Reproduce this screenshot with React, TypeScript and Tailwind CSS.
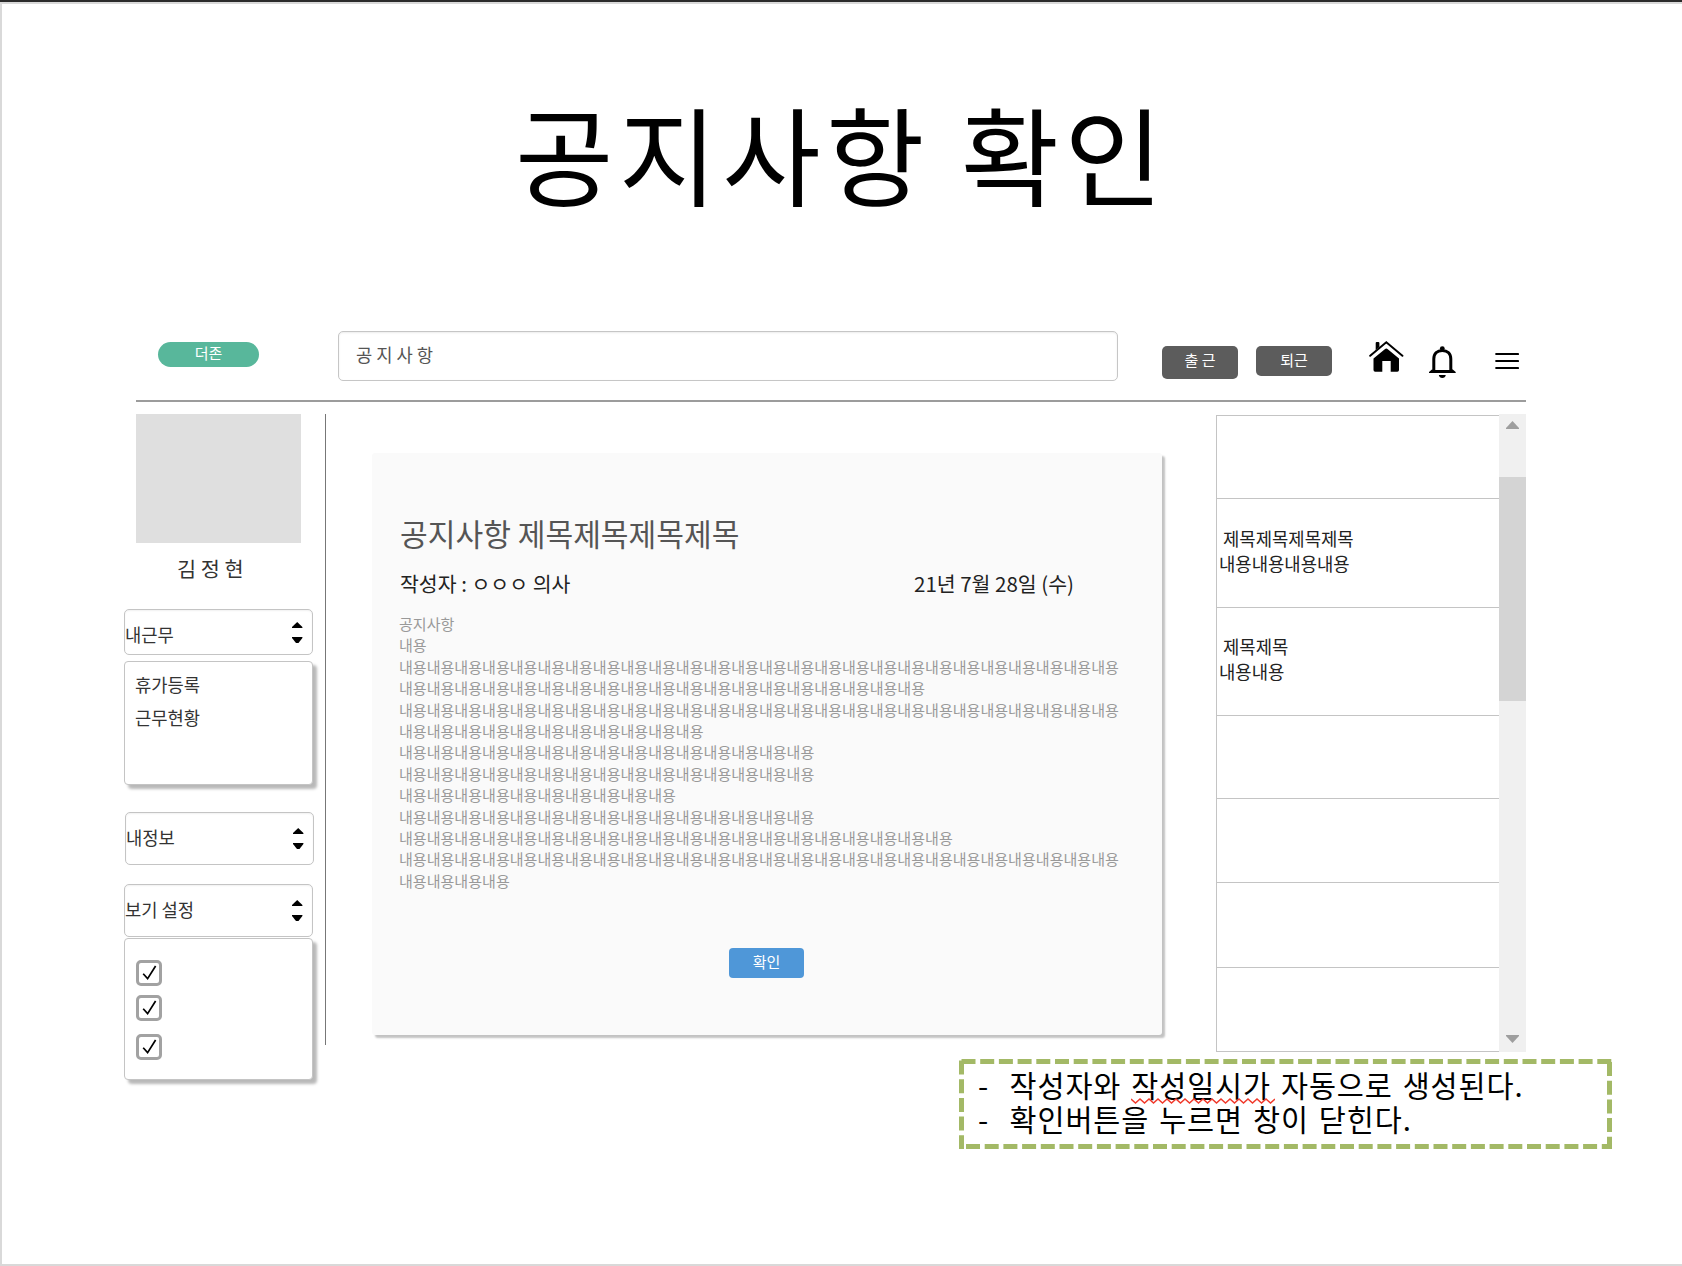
import React from "react";

const bodyCounts = [26, 19, 26, 11, 15, 15, 10, 15, 20, 26, 4];

function Stepper() {
  return (
    <svg width="11" height="22" viewBox="0 0 11 22" className="mt-px shrink-0">
      <path d="M5.2 0 L10.4 5 V6 H0 V5 Z" fill="#000" />
      <path d="M0 15 H10.4 V16 L6.5 21 H4 L0 16 Z" fill="#000" />
    </svg>
  );
}

function Select({ label, className, labelClass }: { label: string; className: string; labelClass: string }) {
  return (
    <div
      className={`flex shrink-0 items-center justify-between rounded-[5px] border border-[#c4c4c4] bg-white pr-[9px] text-[17.7px] text-[#333] shadow-[inset_0_1px_2px_rgba(0,0,0,0.06)] ${className}`}
    >
      <span className={`leading-[24px] ${labelClass}`}>{label}</span>
      <Stepper />
    </div>
  );
}

function Check({ className }: { className: string }) {
  return (
    <div
      className={`flex h-[26px] w-[26px] shrink-0 items-center justify-center rounded-[5px] border-[3px] border-[#a2a2a2] bg-white ${className}`}
    >
      <svg width="20" height="20" viewBox="1 1 20 20" fill="none" className="shrink-0">
        <path d="M5.2 11.8 L9.6 16.6 L17.6 4" stroke="#000" strokeWidth="1.7" />
      </svg>
    </div>
  );
}

function HomeIcon() {
  return (
    <svg width="35" height="32" viewBox="0 0 35 32" className="shrink-0">
      <path d="M6.7 9 V2 Q6.7 1 7.7 1 H9.4 Q10.4 1 10.4 2 V6 Z" fill="#000" />
      <path d="M1.2 14.8 L17.3 1.3 L33.4 14.8" fill="none" stroke="#000" strokeWidth="2" strokeLinecap="round" />
      <path
        d="M17.3 7.6 Q18 7.6 18.8 8.3 L30 17.6 V29 Q30 30.7 28.3 30.7 H21.7 V20 H13.3 V30.7 H6.2 Q4.5 30.7 4.5 29 V17.6 L15.8 8.3 Q16.6 7.6 17.3 7.6 Z"
        fill="#000"
      />
    </svg>
  );
}

function BellIcon() {
  return (
    <svg width="28" height="33" viewBox="0 0 28 33" className="shrink-0">
      <circle cx="13.3" cy="2.6" r="2.4" fill="#000" />
      <path
        d="M4.8 25 V13 C4.8 7.5 8.4 4.5 13.3 4.5 S21.8 7.5 21.8 13 V25"
        fill="none"
        stroke="#000"
        strokeWidth="3"
      />
      <path d="M0 27 V26 L3.5 23 V24 H23.2 V23 L26.7 26 V27 Z" fill="#000" />
      <path d="M9.8 29 H16.8 C16.4 31 15.2 32 13.3 32 S10.2 31 9.8 29 Z" fill="#000" />
    </svg>
  );
}

function MenuIcon() {
  return (
    <svg width="24" height="18" viewBox="0 0 24 18" className="shrink-0">
      <path d="M1.2 2 H23 M1.2 9 H23 M1.2 16 H23" stroke="#000" strokeWidth="2.2" strokeLinecap="round" />
    </svg>
  );
}

function Header() {
  return (
    <header className="ml-[12px] flex h-[72px] w-[1390px] shrink-0 items-start border-b-2 border-[#9c9c9c]">
      <div className="ml-[22px] mt-[12px] flex h-[25px] w-[101px] items-center justify-center rounded-full bg-[#58b79b] text-[15px] leading-[20px] text-white">
        <span className="-mt-[3px]">더존</span>
      </div>
      <div className="ml-[79px] mt-px flex h-[50px] w-[780px] items-center rounded-[5px] border border-[#c6c6c6] pl-[17px] text-[17.7px] text-[#555] shadow-[inset_0_1px_2px_rgba(0,0,0,0.08)]">
        <span className="-mt-[3px]">공 지 사 항</span>
      </div>
      <div className="ml-[44px] mt-[16px] flex h-[33px] w-[76px] items-center justify-center rounded-[5px] bg-[#5c5c5c] text-[15px] text-white">
        <span className="-mt-[5px]">출 근</span>
      </div>
      <div className="ml-[18px] mt-[16px] flex h-[30px] w-[76px] items-center justify-center rounded-[5px] bg-[#5c5c5c] text-[15px] text-white">
        <span className="-mt-[2px]">퇴근</span>
      </div>
      <div className="ml-[37px] mt-[11px]">
        <HomeIcon />
      </div>
      <div className="ml-[25px] mt-[16px]">
        <BellIcon />
      </div>
      <div className="ml-[38px] mt-[22px]">
        <MenuIcon />
      </div>
    </header>
  );
}

function Sidebar() {
  return (
    <aside className="flex w-[190px] shrink-0 flex-col">
      <div className="ml-[12px] h-[129px] w-[165px] shrink-0 bg-[#dfdfdf]" />
      <div className="ml-[53px] mt-[11px] h-[28px] shrink-0 whitespace-nowrap text-[20.8px] leading-[28px] text-[#333]">
        김 정 현
      </div>
      <Select label="내근무" labelClass="pt-[4px]" className="mt-[27px] h-[46px] w-[189px]" />
      <div className="mt-[6px] flex h-[124px] w-[189px] shrink-0 flex-col rounded-[4px] border border-[#c4c4c4] bg-white pl-[10px] pt-[6px] text-[17.7px] leading-[33px] text-[#333] shadow-[4px_4px_3px_rgba(0,0,0,0.28)]">
        <span>휴가등록</span>
        <span>근무현황</span>
      </div>
      <Select label="내정보" labelClass="pb-[4px]" className="ml-px mt-[27px] h-[53px] w-[189px]" />
      <Select label="보기 설정" labelClass="pb-[4px]" className="mt-[19px] h-[53px] w-[189px]" />
      <div className="mt-px flex h-[142px] w-[189px] shrink-0 flex-col rounded-[4px] border border-[#c4c4c4] bg-white pl-[11px] pt-[21px] shadow-[4px_4px_3px_rgba(0,0,0,0.28)]">
        <Check className="" />
        <Check className="mt-[9px]" />
        <Check className="mt-[13px]" />
      </div>
    </aside>
  );
}

function Notice() {
  return (
    <main className="ml-[46px] mt-[39px] flex h-[582px] w-[790px] shrink-0 flex-col rounded-[3px] bg-[#fafafa] pl-[27px] shadow-[3px_3px_2px_rgba(0,0,0,0.24)]">
      <h2 className="ml-px mt-[58px] h-[44px] text-[30.15px] leading-[44px] text-[#555]">공지사항 제목제목제목제목</h2>
      <div className="ml-px mt-[13px] flex h-[30px] w-[674px] items-center justify-between text-[20.5px] leading-[30px] text-[#222]">
        <span>작성자 : ㅇㅇㅇ 의사</span>
        <span>21년 7월 28일 (수)</span>
      </div>
      <div className="mt-[15px] whitespace-nowrap text-[15.05px] leading-[21.4px] text-[#999]">
        <p>공지사항</p>
        <p>내용</p>
        {bodyCounts.map((n, i) => (
          <p key={i}>{"내용".repeat(n)}</p>
        ))}
      </div>
      <button className="ml-[330px] mt-[57px] flex h-[30px] w-[75px] shrink-0 items-center justify-center rounded-[4px] bg-[#4f97d8] text-[15px] text-white">
        <span className="-mt-[3px]">확인</span>
      </button>
    </main>
  );
}

function Row({ title, text, className }: { title?: string; text?: string; className: string }) {
  return (
    <div className={`shrink-0 border-b border-[#c4c4c4] pl-[2px] text-[17.75px] leading-[25.4px] text-[#222] ${className}`}>
      {title && <p className="pl-[4px]">{title}</p>}
      {text && <p>{text}</p>}
    </div>
  );
}

function List() {
  return (
    <section className="ml-[54px] flex h-[638px] shrink-0">
      <div className="mt-px flex h-[637px] w-[283px] flex-col border-l border-t border-[#c4c4c4]">
        <Row className="h-[83px]" />
        <Row title="제목제목제목제목" text="내용내용내용내용" className="h-[109px] pt-[27px]" />
        <Row title="제목제목" text="내용내용" className="h-[108px] pt-[26px]" />
        <Row className="h-[83px]" />
        <Row className="h-[84px]" />
        <Row className="h-[85px]" />
        <Row className="h-[84px]" />
      </div>
      <div className="flex w-[27px] flex-col items-center bg-[#f0f0f0]">
        <svg width="13" height="8" viewBox="0 0 13 8" className="mt-[7px] shrink-0">
          <path d="M6.5 0 L13 7 V8 H0 V7 Z" fill="#9e9e9e" />
        </svg>
        <div className="mt-[48px] h-[224px] w-full bg-[#d4d4d4]" />
        <svg width="13" height="8" viewBox="0 0 13 8" className="mb-[9px] mt-auto shrink-0">
          <path d="M6.5 8 L13 1 V0 H0 V1 Z" fill="#9e9e9e" />
        </svg>
      </div>
    </section>
  );
}

function Annotation() {
  return (
    <div className="relative ml-[835px] h-[90px] w-[653px] shrink-0">
      <svg width="653" height="90" className="absolute inset-0" fill="none" stroke="#a3b966" strokeWidth="5">
        <path d="M2 2.5 H653" strokeDasharray="14 4.7" strokeDashoffset="-0.5" />
        <path d="M2.5 0 V90" strokeDasharray="14 4.7" strokeDashoffset="-1.5" />
        <path d="M650.5 0 V90" strokeDasharray="14 4.7" strokeDashoffset="-3" />
        <path d="M7 87.5 H653" strokeDasharray="14 4.7" />
      </svg>
      <div className="flex flex-col whitespace-nowrap pl-[19px] pt-[9px] text-[29.4px] leading-[33.7px] tracking-[0.9px] text-black [word-spacing:2.5px]">
        <div className="flex">
          <span className="w-[31.5px]">-</span>
          <p>
            작성자와{" "}
            <span className="relative">
              작성일시가
              <svg width="144" height="6" viewBox="0 0 144 6" className="absolute left-0 top-[35px]" fill="none">
                <path
                  d={"M0 1" + Array.from({ length: 32 }, (_, i) => ` L${(i + 1) * 4.5} ${i % 2 ? 1 : 5}`).join("")}
                  stroke="#f0392b"
                  strokeWidth="1.5"
                />
              </svg>
            </span>{" "}
            자동으로 생성된다.
          </p>
        </div>
        <div className="flex">
          <span className="w-[31.5px]">-</span>
          <p>확인버튼을 누르면 창이 닫힌다.</p>
        </div>
      </div>
    </div>
  );
}

export default function App() {
  return (
    <div className="h-[1266px] w-[1682px] overflow-hidden border-t-2 border-[#2b2b2b] bg-white font-['Noto_Sans_CJK_KR',sans-serif]">
      <div className="flex h-[1264px] flex-col border-b-2 border-l-2 border-t-2 border-[#d9d9d9] pl-[122px]">
        <h1 className="ml-[391px] h-[326px] shrink-0 whitespace-nowrap text-[107px] leading-[295px] tracking-[5.2px] text-black [word-spacing:2px]">
          공지사항 확인
        </h1>
        <Header />
        <div className="mt-[12px] flex h-[645px] shrink-0 items-start">
          <Sidebar />
          <div className="ml-[11px] h-[631px] w-px shrink-0 bg-[#777]" />
          <Notice />
          <List />
        </div>
        <Annotation />
      </div>
    </div>
  );
}
